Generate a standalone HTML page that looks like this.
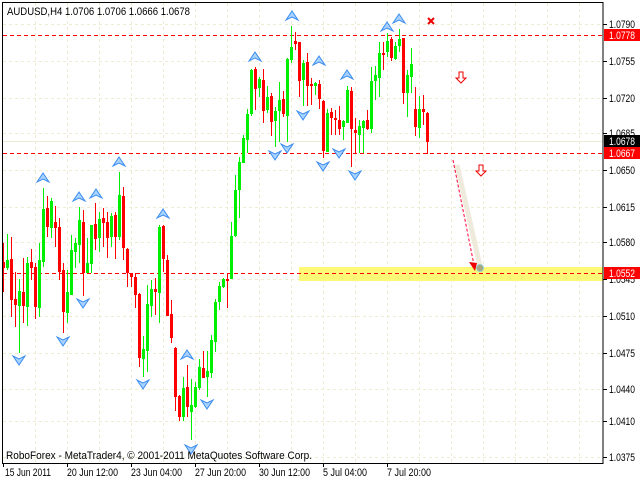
<!DOCTYPE html>
<html><head><style>
html,body{margin:0;padding:0;background:#fff;}
svg{display:block;font-family:"Liberation Sans",Tahoma,sans-serif;font-size:11px;}
</style></head><body>
<svg width="640" height="480" viewBox="0 0 640 480" xmlns="http://www.w3.org/2000/svg">
<rect width="640" height="480" fill="#fff"/>
<g stroke="#efecd4" stroke-width="1" stroke-dasharray="3,3">
<path d="M35.5 3V463M67.5 3V463M99.5 3V463M131.5 3V463M163.5 3V463M195.5 3V463M227.5 3V463M259.5 3V463M291.5 3V463M323.5 3V463M355.5 3V463M387.5 3V463M419.5 3V463M451.5 3V463M483.5 3V463M515.5 3V463M547.5 3V463M579.5 3V463"/>
<path d="M3 24.5H603M3 61.5H603M3 98.5H603M3 133.5H603M3 170.5H603M3 207.5H603M3 242.5H603M3 279.5H603M3 316.5H603M3 353.5H603M3 389.5H603M3 421.5H603M3 457.5H603"/>
</g>
<line x1="3" y1="141.5" x2="603" y2="141.5" stroke="#ececd8"/>
<rect x="299" y="267" width="304" height="14" fill="#fdf875"/>
<g stroke="#ff0000" stroke-width="1" stroke-dasharray="4,3" fill="none">
<path d="M3 35.5H603"/>
<path d="M3 153.5H603"/>
<path d="M3 273.5H603"/>
</g>
<g>
<g stroke="#f00" fill="#f00">
<path d="M3.5 243V292M11.5 237V317M15.5 272V327M23.5 258V323M31.5 249V280M35.5 263V319M47.5 196V237M55.5 206V247M59.5 218V280M63.5 263V333M83.5 210V296M95.5 203V250M103.5 208V247M107.5 212V258M115.5 212V259M123.5 187V260M127.5 248V287M131.5 273V287M135.5 273V308M139.5 293V367M155.5 278V315M163.5 225V272M167.5 255V316M171.5 300V343M175.5 347V411M179.5 395V421M187.5 365V417M203.5 351V375M227.5 273V308M255.5 67V110M263.5 69V123M271.5 93V136M283.5 91V117M295.5 32V50M299.5 42V97M307.5 53V106M311.5 78V105M319.5 80V109M323.5 100V158M331.5 108V135M335.5 110V135M339.5 106V135M351.5 87V167M355.5 118V153M367.5 110V130M383.5 42V70M391.5 37V61M403.5 38V104M415.5 87V136M423.5 95V125M427.5 112V154" stroke-width="1"/>
<g stroke="none">
<rect x="2" y="262" width="3" height="6"/><rect x="10" y="259" width="3" height="41"/><rect x="14" y="299" width="3" height="6"/><rect x="22" y="292" width="3" height="14"/><rect x="30" y="262" width="3" height="6"/><rect x="34" y="267" width="3" height="40"/><rect x="46" y="208" width="3" height="19"/><rect x="54" y="222" width="3" height="6"/><rect x="58" y="227" width="3" height="45"/><rect x="62" y="270" width="3" height="42"/><rect x="82" y="222" width="3" height="51"/><rect x="94" y="224" width="3" height="15"/><rect x="102" y="218" width="3" height="5"/><rect x="106" y="222" width="3" height="16"/><rect x="114" y="215" width="3" height="22"/><rect x="122" y="196" width="3" height="52"/><rect x="126" y="249" width="3" height="24"/><rect x="130" y="273" width="3" height="4"/><rect x="134" y="277" width="3" height="18"/><rect x="138" y="294" width="3" height="64"/><rect x="154" y="289" width="3" height="3"/><rect x="162" y="226" width="3" height="33"/><rect x="166" y="260" width="3" height="56"/><rect x="170" y="314" width="3" height="24"/><rect x="174" y="348" width="3" height="49"/><rect x="178" y="396" width="3" height="21"/><rect x="186" y="387" width="3" height="20"/><rect x="202" y="368" width="3" height="10"/><rect x="226" y="279" width="3" height="2"/><rect x="254" y="69" width="3" height="20"/><rect x="262" y="80" width="3" height="31"/><rect x="270" y="96" width="3" height="26"/><rect x="282" y="99" width="3" height="15"/><rect x="294" y="41" width="3" height="3"/><rect x="298" y="42" width="3" height="39"/><rect x="306" y="62" width="3" height="24"/><rect x="310" y="84" width="3" height="2"/><rect x="318" y="84" width="3" height="15"/><rect x="322" y="101" width="3" height="50"/><rect x="330" y="112" width="3" height="6"/><rect x="334" y="118" width="3" height="2"/><rect x="338" y="120" width="3" height="9"/><rect x="350" y="91" width="3" height="38"/><rect x="354" y="130" width="3" height="3"/><rect x="366" y="120" width="3" height="9"/><rect x="382" y="53" width="3" height="2"/><rect x="390" y="39" width="3" height="19"/><rect x="402" y="38" width="3" height="55"/><rect x="414" y="109" width="3" height="18"/><rect x="422" y="109" width="3" height="3"/><rect x="426" y="113" width="3" height="29"/>
</g></g>
<g stroke="#0e0" fill="#0e0">
<path d="M7.5 234V270M19.5 279V353M27.5 257V326M39.5 243V317M43.5 188V267M51.5 198V238M67.5 270V323M71.5 235V295M75.5 238V268M79.5 207V263M87.5 238V273M91.5 225V273M99.5 212V252M111.5 213V247M119.5 172V240M143.5 336V377M147.5 285V372M151.5 280V317M159.5 225V323M183.5 377V421M191.5 379V440M195.5 382V408M199.5 359V390M207.5 351V397M211.5 335V378M215.5 299V352M219.5 282V310M223.5 278V288M231.5 222V278M235.5 175V237M239.5 157V218M243.5 135V163M247.5 109V153M251.5 69V116M259.5 77V97M267.5 86V113M275.5 107V147M279.5 82V142M287.5 58V142M291.5 26V63M303.5 60V106M315.5 82V95M327.5 109V152M343.5 120V140M347.5 86V123M359.5 120V153M363.5 120V153M371.5 67V133M375.5 66V100M379.5 42V97M387.5 33V57M395.5 42V60M399.5 29V52M407.5 70V117M411.5 48V93M419.5 96V138" stroke-width="1"/>
<g stroke="none">
<rect x="6" y="260" width="3" height="8"/><rect x="18" y="291" width="3" height="15"/><rect x="26" y="263" width="3" height="44"/><rect x="38" y="260" width="3" height="48"/><rect x="42" y="209" width="3" height="53"/><rect x="50" y="201" width="3" height="27"/><rect x="66" y="292" width="3" height="21"/><rect x="70" y="250" width="3" height="45"/><rect x="74" y="243" width="3" height="9"/><rect x="78" y="220" width="3" height="25"/><rect x="86" y="263" width="3" height="10"/><rect x="90" y="225" width="3" height="39"/><rect x="98" y="219" width="3" height="19"/><rect x="110" y="216" width="3" height="21"/><rect x="118" y="195" width="3" height="42"/><rect x="142" y="349" width="3" height="10"/><rect x="146" y="304" width="3" height="47"/><rect x="150" y="289" width="3" height="17"/><rect x="158" y="227" width="3" height="66"/><rect x="182" y="388" width="3" height="29"/><rect x="190" y="405" width="3" height="7"/><rect x="194" y="387" width="3" height="20"/><rect x="198" y="367" width="3" height="21"/><rect x="206" y="371" width="3" height="6"/><rect x="210" y="340" width="3" height="33"/><rect x="214" y="302" width="3" height="40"/><rect x="218" y="286" width="3" height="16"/><rect x="222" y="279" width="3" height="8"/><rect x="230" y="236" width="3" height="43"/><rect x="234" y="190" width="3" height="46"/><rect x="238" y="162" width="3" height="28"/><rect x="242" y="138" width="3" height="25"/><rect x="246" y="114" width="3" height="26"/><rect x="250" y="70" width="3" height="44"/><rect x="258" y="79" width="3" height="9"/><rect x="266" y="97" width="3" height="13"/><rect x="274" y="111" width="3" height="10"/><rect x="278" y="100" width="3" height="11"/><rect x="286" y="59" width="3" height="57"/><rect x="290" y="47" width="3" height="13"/><rect x="302" y="63" width="3" height="17"/><rect x="314" y="83" width="3" height="3"/><rect x="326" y="113" width="3" height="39"/><rect x="342" y="121" width="3" height="6"/><rect x="346" y="90" width="3" height="33"/><rect x="358" y="126" width="3" height="9"/><rect x="362" y="121" width="3" height="7"/><rect x="370" y="81" width="3" height="48"/><rect x="374" y="75" width="3" height="6"/><rect x="378" y="53" width="3" height="25"/><rect x="386" y="41" width="3" height="11"/><rect x="394" y="46" width="3" height="13"/><rect x="398" y="39" width="3" height="7"/><rect x="406" y="75" width="3" height="18"/><rect x="410" y="64" width="3" height="13"/><rect x="418" y="109" width="3" height="19"/>
</g></g>
</g>
<defs>
<path id="up" d="M-6 4L0 -5L6 4L0 1Z" fill="#a8d2ff" stroke="#3a8cf0" stroke-width="1"/>
<path id="dn" d="M-6 -4L0 5L6 -4L0 -1Z" fill="#a8d2ff" stroke="#3a8cf0" stroke-width="1"/>
</defs>
<g>
<use href="#up" x="43" y="178"/><use href="#up" x="79" y="197"/><use href="#up" x="96" y="194"/><use href="#up" x="119" y="162"/><use href="#up" x="163" y="214"/><use href="#up" x="187" y="355"/><use href="#up" x="255" y="57"/><use href="#up" x="292" y="16"/><use href="#up" x="319" y="61"/><use href="#up" x="347" y="75"/><use href="#up" x="387" y="27"/><use href="#up" x="399" y="19"/>
<use href="#dn" x="19" y="360"/><use href="#dn" x="63" y="341"/><use href="#dn" x="83" y="303"/><use href="#dn" x="143" y="384"/><use href="#dn" x="207" y="404"/><use href="#dn" x="191" y="449"/><use href="#dn" x="303" y="115"/><use href="#dn" x="275" y="155"/><use href="#dn" x="287" y="148"/><use href="#dn" x="323" y="166"/><use href="#dn" x="339" y="153"/><use href="#dn" x="355" y="175"/>
</g>
<path d="M428 18l6 6M434 18l-6 6" stroke="#e00" stroke-width="2"/>
<path d="M459 72h4v6h3l-5 5l-5-5h3z" fill="#fff" stroke="#e00"/>
<path d="M479 165h4v6h3l-5 5l-5-5h3z" fill="#fff" stroke="#e00"/>
<line x1="457" y1="165" x2="480" y2="266" stroke="#eeeadc" stroke-width="5"/>
<line x1="453" y1="160" x2="474" y2="265" stroke="#f03" stroke-dasharray="3,2"/>
<path d="M469 262L477 263L475 271Z" fill="#e00"/>
<circle cx="480" cy="268" r="3.5" fill="#a8a880" stroke="#9cc" stroke-width="1"/>
<rect x="2.5" y="2.5" width="600.5" height="461" fill="none" stroke="#000"/>
<g stroke="#000">
<path d="M603 24.5h4M603 61.5h4M603 98.5h4M603 133.5h4M603 170.5h4M603 207.5h4M603 242.5h4M603 279.5h4M603 316.5h4M603 353.5h4M603 389.5h4M603 421.5h4M603 457.5h4"/>
<path d="M3.5 463v4M67.5 463v4M131.5 463v4M195.5 463v4M259.5 463v4M323.5 463v4M387.5 463v4"/>
</g>
<g fill="#000" font-size="11">
<text x="609" y="28" textLength="26" lengthAdjust="spacingAndGlyphs">1.0790</text><text x="609" y="65" textLength="26" lengthAdjust="spacingAndGlyphs">1.0755</text><text x="609" y="102" textLength="26" lengthAdjust="spacingAndGlyphs">1.0720</text><text x="609" y="137" textLength="26" lengthAdjust="spacingAndGlyphs">1.0685</text><text x="609" y="174" textLength="26" lengthAdjust="spacingAndGlyphs">1.0650</text><text x="609" y="211" textLength="26" lengthAdjust="spacingAndGlyphs">1.0615</text><text x="609" y="246" textLength="26" lengthAdjust="spacingAndGlyphs">1.0580</text><text x="609" y="283" textLength="26" lengthAdjust="spacingAndGlyphs">1.0545</text><text x="609" y="320" textLength="26" lengthAdjust="spacingAndGlyphs">1.0510</text><text x="609" y="357" textLength="26" lengthAdjust="spacingAndGlyphs">1.0475</text><text x="609" y="393" textLength="26" lengthAdjust="spacingAndGlyphs">1.0440</text><text x="609" y="425" textLength="26" lengthAdjust="spacingAndGlyphs">1.0410</text><text x="609" y="461" textLength="26" lengthAdjust="spacingAndGlyphs">1.0375</text>
</g>
<g font-size="11">
<rect x="604" y="29" width="36" height="12" fill="#f00"/><text x="609" y="39" fill="#fff" textLength="26" lengthAdjust="spacingAndGlyphs">1.0778</text>
<rect x="604" y="135" width="36" height="12" fill="#000"/><text x="609" y="145" fill="#fff" textLength="26" lengthAdjust="spacingAndGlyphs">1.0678</text>
<rect x="604" y="147" width="36" height="12" fill="#f00"/><text x="609" y="157" fill="#fff" textLength="26" lengthAdjust="spacingAndGlyphs">1.0667</text>
<rect x="604" y="267" width="36" height="12" fill="#f00"/><text x="609" y="277" fill="#fff" textLength="26" lengthAdjust="spacingAndGlyphs">1.0552</text>
</g>
<g fill="#000" font-size="11">
<text x="5" y="476" textLength="46" lengthAdjust="spacingAndGlyphs">15 Jun 2011</text>
<text x="67" y="476" textLength="51" lengthAdjust="spacingAndGlyphs">20 Jun 12:00</text>
<text x="131" y="476" textLength="51" lengthAdjust="spacingAndGlyphs">23 Jun 04:00</text>
<text x="195" y="476" textLength="51" lengthAdjust="spacingAndGlyphs">27 Jun 20:00</text>
<text x="259" y="476" textLength="51" lengthAdjust="spacingAndGlyphs">30 Jun 12:00</text>
<text x="323" y="476" textLength="44" lengthAdjust="spacingAndGlyphs">5 Jul 04:00</text>
<text x="387" y="476" textLength="44" lengthAdjust="spacingAndGlyphs">7 Jul 20:00</text>
<text x="7" y="15" textLength="183" lengthAdjust="spacingAndGlyphs">AUDUSD,H4  1.0706 1.0706 1.0666 1.0678</text>
<text x="6" y="459" textLength="306" lengthAdjust="spacingAndGlyphs">RoboForex - MetaTrader4, © 2001-2011 MetaQuotes Software Corp.</text>
</g>
</svg>
</body></html>
